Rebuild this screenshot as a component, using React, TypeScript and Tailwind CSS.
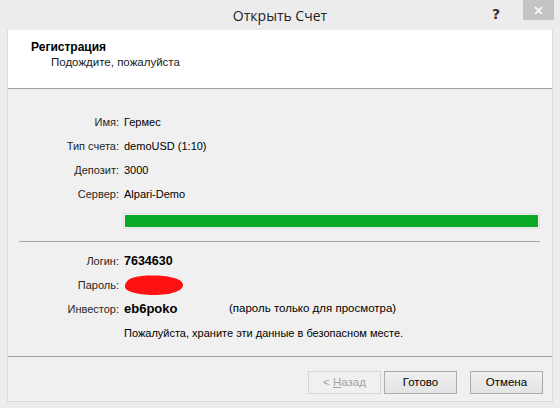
const font = "font-['Liberation_Sans',Arial,sans-serif]";

const Row = ({ label, children }: { label: string; children?: React.ReactNode }) => (
  <div className="flex h-[24px] items-center">
    <div className="w-[111px] shrink-0 text-right text-[#262626]">{label}</div>
    <div className="ml-[5px] flex items-center text-black">{children}</div>
  </div>
);

const Btn = ({ children, disabled, className = '' }: { children: React.ReactNode; disabled?: boolean; className?: string }) => (
  <button
    className={
      disabled
        ? `h-[23px] w-[73px] border border-[#d5d5d5] bg-[#f0f0f0] text-[#a3a3a3] ${className}`
        : `h-[23px] w-[73px] border border-[#acacac] bg-gradient-to-b from-[#f0f0f0] to-[#e3e3e3] text-black ${className}`
    }
  >
    {children}
  </button>
);

export default function App() {
  return (
    <div className={`flex h-[408px] w-[560px] flex-col bg-[#ececec] text-[11px] ${font}`}>
      {/* title bar */}
      <div className="relative flex h-[30px] shrink-0 items-center justify-center">
        <span className="font-['Open_Sans',sans-serif] text-[14px] text-[#222]">Открыть Счет</span>
        <span className="absolute left-[492px] top-[4px] font-['DejaVu_Sans',sans-serif] text-[14px] font-bold text-[#333]">?</span>
        <div className="absolute left-[523px] top-0 flex h-[20px] w-[31px] items-center justify-center bg-[#c4c4c4]">
          <svg width="9" height="9" viewBox="0 0 9 9">
            <path d="M1 1L8 8M8 1L1 8" stroke="#fff" strokeWidth="1.6" />
          </svg>
        </div>
      </div>

      {/* panel */}
      <div className="mx-[7px] mb-[6px] flex flex-1 flex-col border-x border-b border-[#d9d9d9] bg-[#f0f0f0]">
        <div className="h-[59px] border-b border-[#a0a0a0] bg-white pl-[23px] pt-[10px]">
          <div className="text-[12px] font-bold leading-[15px] text-black">Регистрация</div>
          <div className="pl-[20px] text-[11.5px] leading-[15px] text-[#1a1a1a]">Подождите, пожалуйста</div>
        </div>

        <div className="pt-[21px]">
          <Row label="Имя:">Гермес</Row>
          <Row label="Тип счета:">demoUSD (1:10)</Row>
          <Row label="Депозит:">3000</Row>
          <Row label="Сервер:">Alpari-Demo</Row>
        </div>

        <div className="ml-[115px] mr-[12px] mt-[7px] h-[16px] border border-[#e2e2e2] p-px">
          <div className="h-full bg-[#09a827]" />
        </div>

        <div className="ml-[11px] mr-[12px] mt-[12px] border-t border-[#a8a8a8]" />

        <div className="pt-[7px]">
          <Row label="Логин:">
            <span className="text-[12.5px] font-bold">7634630</span>
          </Row>
          <Row label="Пароль:">
            <svg width="62" height="22" viewBox="0 0 62 22" className="-ml-[1px]">
              <path d="M3 9C5 3 18 1 32 1.5C48 2 60 5 60 11C60 17 48 21 31 21C14 21 2 17 2 13C2 11 2 10 3 9Z" fill="#ff1111" />
            </svg>
          </Row>
          <Row label="Инвестор:">
            <span className="w-[105px] text-[13px] font-bold">eb6poko</span>
            <span className="text-[11.5px]">(пароль только для просмотра)</span>
          </Row>
          <Row label="">Пожалуйста, храните эти данные в безопасном месте.</Row>
        </div>

        <div className="mt-[11px] border-t border-[#a0a0a0]" />

        <div className="flex justify-end pr-[9px] pt-[14px] text-[11.5px]">
          <Btn disabled>
            &lt; <span className="underline">Н</span>азад
          </Btn>
          <Btn className="ml-[3px]">Готово</Btn>
          <Btn className="ml-[13px]">Отмена</Btn>
        </div>
      </div>
    </div>
  );
}
